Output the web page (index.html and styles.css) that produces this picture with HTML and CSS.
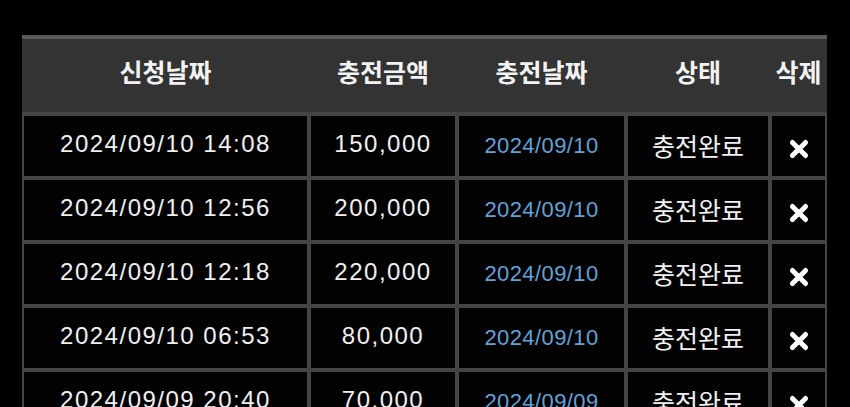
FILE: index.html
```html
<!DOCTYPE html>
<html>

<head>
    <meta charset="UTF-8">
    <title>충전내역</title>
    <link rel="stylesheet" href="styles.css">
</head>

<body>

<div class="wrap">
    <table class="charge-list">
        <colgroup>
            <col class="c-req">
            <col class="c-amount">
            <col class="c-date">
            <col class="c-state">
            <col class="c-del">
        </colgroup>
        <thead>
            <tr>
                <th>신청날짜</th>
                <th>충전금액</th>
                <th>충전날짜</th>
                <th>상태</th>
                <th>삭제</th>
            </tr>
        </thead>
        <tbody>
            <tr>
                <td class="num">2024/09/10 14:08</td>
                <td class="num">150,000</td>
                <td class="day">2024/09/10</td>
                <td>충전완료</td>
                <td><a href="javascript:;" class="del"><svg viewBox="0 0 20 20"><path d="M4 4L16 16M16 4L4 16"/></svg></a></td>
            </tr>
            <tr>
                <td class="num">2024/09/10 12:56</td>
                <td class="num">200,000</td>
                <td class="day">2024/09/10</td>
                <td>충전완료</td>
                <td><a href="javascript:;" class="del"><svg viewBox="0 0 20 20"><path d="M4 4L16 16M16 4L4 16"/></svg></a></td>
            </tr>
            <tr>
                <td class="num">2024/09/10 12:18</td>
                <td class="num">220,000</td>
                <td class="day">2024/09/10</td>
                <td>충전완료</td>
                <td><a href="javascript:;" class="del"><svg viewBox="0 0 20 20"><path d="M4 4L16 16M16 4L4 16"/></svg></a></td>
            </tr>
            <tr>
                <td class="num">2024/09/10 06:53</td>
                <td class="num">80,000</td>
                <td class="day">2024/09/10</td>
                <td>충전완료</td>
                <td><a href="javascript:;" class="del"><svg viewBox="0 0 20 20"><path d="M4 4L16 16M16 4L4 16"/></svg></a></td>
            </tr>
            <tr>
                <td class="num">2024/09/09 20:40</td>
                <td class="num">70,000</td>
                <td class="day">2024/09/09</td>
                <td>충전완료</td>
                <td><a href="javascript:;" class="del"><svg viewBox="0 0 20 20"><path d="M4 4L16 16M16 4L4 16"/></svg></a></td>
            </tr>
        </tbody>
    </table>
</div>

</body>

</html>
```

FILE: styles.css
```css
* {
    margin: 0;
    padding: 0;
    text-decoration: none;
}
html, body {
    background: #000;
    overflow: hidden;
}
body {
    font-family: "Liberation Sans", "Noto Sans CJK KR", sans-serif;
    color: #fff;
}
.wrap {
    padding: 35px 23px 0 22px;
}
.charge-list {
    width: 805px;
    table-layout: fixed;
    border-collapse: separate;
    border-spacing: 0;
}
.c-req { width: 287px; }
.c-amount { width: 148px; }
.c-date { width: 169px; }
.c-state { width: 144px; }
.c-del { width: 57px; }

.charge-list thead th {
    height: 79px;
    background: #333;
    border-top: 4px solid #595959;
    border-bottom: 2px solid #454545;
    font-family: "Noto Sans CJK KR", sans-serif;
    font-size: 25px;
    font-weight: bold;
    text-align: center;
    color: #f2f2f2;
    padding-bottom: 9px;
    box-sizing: border-box;
    white-space: nowrap;
}
.charge-list td {
    height: 64px;
    box-sizing: border-box;
    border: 2px solid #454545;
    background: #020202;
    text-align: center;
    font-family: "Noto Sans CJK KR", sans-serif;
    font-size: 25px;
    color: #f0f0f0;
    padding-bottom: 2px;
}
.charge-list td.num {
    font-family: "Liberation Sans", sans-serif;
    font-size: 24px;
    letter-spacing: 1.5px;
    padding-bottom: 4px;
}
.charge-list td.day {
    font-family: "Liberation Sans", sans-serif;
    font-size: 22px;
    letter-spacing: 0.4px;
    color: #5ea3dc;
    padding-bottom: 0;
}
.del {
    display: inline-block;
    width: 22px;
    height: 22px;
    vertical-align: middle;
}
.del svg {
    width: 22px;
    height: 22px;
    display: block;
}
.del path {
    stroke: #fff;
    stroke-width: 4.5;
    stroke-linecap: round;
    fill: none;
}
```
